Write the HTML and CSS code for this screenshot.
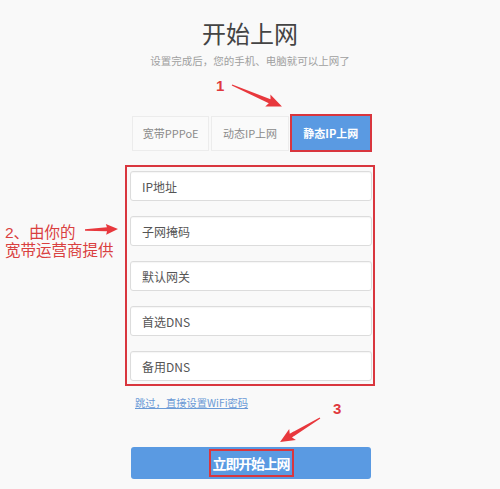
FILE: index.html
```html
<!DOCTYPE html>
<html lang="zh-CN">
<head>
<meta charset="utf-8">
<title>开始上网</title>
<link rel="stylesheet" href="styles.css">
</head>
<body>
<div class="page">
  <h1 class="title">开始上网</h1>
  <p class="sub">设置完成后，您的手机、电脑就可以上网了</p>

  <div class="tabs">
    <div class="tab">宽带PPPoE</div>
    <div class="tab">动态IP上网</div>
    <div class="tab tab-active">静态IP上网</div>
  </div>

  <div class="fields">
    <input class="field" type="text" placeholder="IP地址">
    <input class="field" type="text" placeholder="子网掩码">
    <input class="field" type="text" placeholder="默认网关">
    <input class="field" type="text" placeholder="首选DNS">
    <input class="field" type="text" placeholder="备用DNS">
  </div>

  <div class="skip"><a href="#" class="skip-link">跳过，直接设置WiFi密码</a></div>

  <div class="submit"><span class="submit-label">立即开始上网</span></div>

  <div class="annot">
    <svg class="arrows" width="500" height="489" viewBox="0 0 500 489">
      <g fill="#e8383d">
        <polygon transform="translate(232 85) rotate(23.3)" points="0,-0.6 41,-2.2 39,-6.5 54.4,0 39,6.5 41,2.2 0,0.6"/>
        <polygon transform="translate(85 230) rotate(-1.7)" points="0,-0.8 22,-2 21,-5.5 33,0 21,5.5 22,2 0,0.8"/>
        <polygon transform="translate(320 418) rotate(149)" points="0,-0.6 34,-2.2 32,-6.5 46.6,0 32,6.5 34,2.2 0,0.6"/>
      </g>
    </svg>
    <span class="num num-1">1</span>
    <div class="note-2">
      <span class="note-line">2、由你的</span>
      <span class="note-line">宽带运营商提供</span>
    </div>
    <span class="num num-3">3</span>
  </div>
</div>
</body>
</html>
```

FILE: styles.css
```css
html, body {
  margin: 0;
  padding: 0;
  background: #f9f9f9;
}

body {
  font-family: "Noto Sans CJK SC", "Noto Sans", sans-serif;
  color: #555;
}

.page {
  position: relative;
  width: 500px;
  height: 489px;
  overflow: hidden;
}

.title {
  margin: 0;
  padding-top: 19px;
  font-size: 24px;
  line-height: 28px;
  font-weight: 400;
  color: #444;
  text-align: center;
}

.sub {
  margin: 7px 0 0;
  font-size: 10.5px;
  line-height: 14px;
  color: #a0a0a0;
  text-align: center;
}

.tabs {
  display: flex;
  align-items: center;
  width: 240px;
  height: 38px;
  margin: 46px 0 0 132px;
}

.tab {
  box-sizing: border-box;
  width: 78px;
  height: 35px;
  margin-right: 2px;
  border: 1px solid #ececec;
  background: #fafafa;
  color: #8a8a8a;
  font-size: 11px;
  line-height: 33px;
  text-align: center;
}

.tab-active {
  width: 83px;
  height: 38px;
  margin-right: 0;
  margin-left: -1px;
  border: 2px solid #d9363e;
  background: #5a9ae2;
  color: #fff;
  font-weight: 700;
  line-height: 34px;
}

.fields {
  box-sizing: border-box;
  display: flex;
  flex-direction: column;
  gap: 15px;
  width: 250px;
  margin: 13px 0 0 125px;
  padding: 4px 1px 3px 3px;
  border: 2px solid #d9363e;
}

.field {
  box-sizing: border-box;
  display: block;
  width: 242px;
  height: 30px;
  margin: 0;
  padding: 0 0 0 11px;
  border: 1px solid #dcdcdc;
  border-radius: 3px;
  background: #fff;
  box-shadow: inset 0 1px 1px rgba(0, 0, 0, 0.04);
  font-family: "Noto Sans CJK SC", "Noto Sans", sans-serif;
  font-size: 12px;
  color: #555;
  outline: none;
}

.field::placeholder {
  color: #555;
  opacity: 1;
}

.skip {
  margin: 9px 0 0 135px;
  font-size: 10.3px;
  line-height: 15px;
}

.skip-link {
  color: #6a9ad6;
  text-decoration: underline;
}

.submit {
  box-sizing: border-box;
  display: flex;
  align-items: center;
  justify-content: center;
  width: 240px;
  height: 32px;
  margin: 37px 0 0 131px;
  border-radius: 3px;
  background: #5a9ae2;
}

.submit-label {
  box-sizing: border-box;
  display: inline-block;
  width: 85px;
  height: 28px;
  border: 2px solid #d9363e;
  color: #fff;
  font-size: 14px;
  font-weight: 700;
  line-height: 24px;
  letter-spacing: -1.2px;
  text-align: center;
}

.annot {
  position: absolute;
  inset: 0;
  pointer-events: none;
}

.arrows {
  position: absolute;
  left: 0;
  top: 0;
}

.num {
  position: absolute;
  font-family: "Liberation Sans", "DejaVu Sans", sans-serif;
  font-size: 15px;
  font-weight: 700;
  line-height: 15px;
  color: #e0393e;
}

.num-1 {
  left: 216px;
  top: 78px;
}

.num-3 {
  left: 333px;
  top: 401px;
}

.note-2 {
  position: absolute;
  left: 5px;
  top: 224px;
  display: flex;
  flex-direction: column;
  font-family: "Liberation Sans", "Noto Sans CJK SC", sans-serif;
  font-size: 15.5px;
  color: #d9403f;
}

.note-line {
  display: block;
  height: 18px;
  line-height: 18px;
  white-space: nowrap;
}
```
